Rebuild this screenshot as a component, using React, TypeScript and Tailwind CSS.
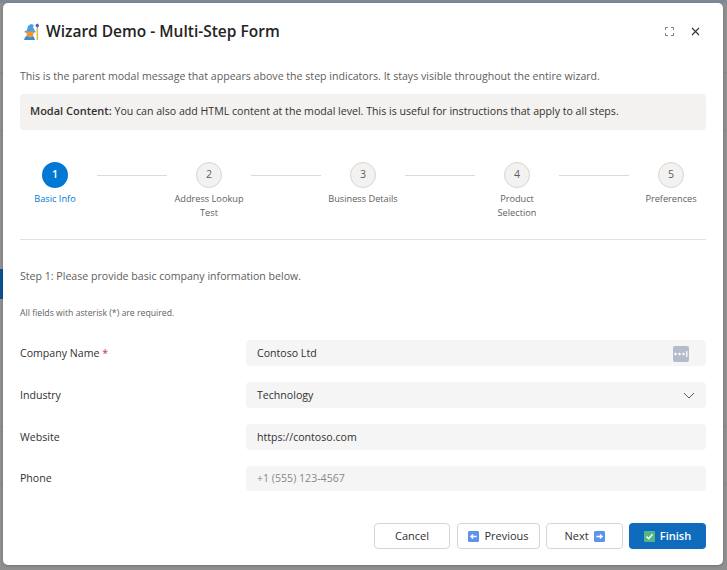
const inputRow = 'flex w-[460px] items-center justify-between rounded-[4px] bg-[#f5f5f5] pl-[11px] pt-[2px]'
const btn = 'flex h-[26px] items-center justify-center rounded-[4px] border border-[#d6d6d6] bg-white pt-px text-[11px] font-medium text-[#323130]'

const steps = [
  { n: 1, label: 'Basic Info' },
  { n: 2, label: 'Address Lookup\nTest' },
  { n: 3, label: 'Business Details' },
  { n: 4, label: 'Product\nSelection' },
  { n: 5, label: 'Preferences' },
]

function WizardIcon() {
  return (
    <svg width="17" height="18" viewBox="0 0 17 18">
      <path d="M1 9 L4 7 L5 3 L8 1 L11 2 L10 4 L12 8 L13 9 L7 11 Z" fill="#4a9fe6" />
      <path d="M1 17 Q2 12 7 12 Q11 12 12 17 Z" fill="#2f8fd8" />
      <path d="M3.5 8.5 H10.5 V11 Q10 14.5 7 14.5 Q4 14.5 3.5 11 Z" fill="#ef9433" />
      <rect x="13.6" y="4" width="1.5" height="13" fill="#f2b233" />
      <path d="M12.6 1.5 L15 0.5 L16.2 3 L14.4 4.6 L12.8 3.6 Z" fill="#2f6fb8" />
    </svg>
  )
}

function ArrowBox({ dir }: { dir: 'left' | 'right' }) {
  return (
    <svg width="11" height="11" viewBox="0 0 12 12">
      <rect width="12" height="12" rx="1.5" fill="#5b93ee" />
      {dir === 'left' ? (
        <path d="M9.5 6 H3.5 M5.5 3.8 L3.2 6 L5.5 8.2" stroke="#fff" strokeWidth="1.5" fill="none" />
      ) : (
        <path d="M2.5 6 H8.5 M6.5 3.8 L8.8 6 L6.5 8.2" stroke="#fff" strokeWidth="1.5" fill="none" />
      )}
    </svg>
  )
}

function Field({ label, required, children }: { label: string; required?: boolean; children: React.ReactNode }) {
  return (
    <div className="flex items-center justify-between">
      <div className="pt-[2px] text-[#323130]">
        {label}
        {required && <span className="text-[#c4314b]"> *</span>}
      </div>
      {children}
    </div>
  )
}

export default function App() {
  return (
    <div className="relative h-[570px] w-[727px] overflow-hidden bg-[#8f8f8f] pl-[3px] pt-[3px] font-['Open_Sans',sans-serif] text-[10.6px]">
      {/* dimmed page behind the modal */}
      <div className="absolute left-0 top-0 h-[3px] w-full bg-[#7d8994]" />
      <div className="absolute left-0 top-[72px] h-px w-full bg-[#878787]" />
      <div className="absolute left-0 top-[130px] h-px w-full bg-[#878787]" />
      <div className="absolute left-0 top-[426px] h-px w-full bg-[#878787]" />
      <div className="absolute left-0 top-[483px] h-px w-full bg-[#878787]" />
      <div className="absolute left-0 top-[269px] h-[30px] w-[3px] bg-[#0a5291]" />

      <div className="relative flex h-[562px] w-[720px] flex-col rounded-[5px] bg-white px-[17px] shadow-[0_1px_3px_rgba(0,0,0,0.2)]">
        {/* Header */}
        <div className="flex h-[56px] shrink-0 items-center justify-between pt-[1px]">
          <div className="flex items-center gap-[6px] pl-[3px] text-[15.5px] font-semibold text-[#242424]">
            <WizardIcon />
            <span>Wizard Demo - Multi-Step Form</span>
          </div>
          <div className="flex items-center gap-[17px] pr-[6px]">
            <svg width="9" height="9" viewBox="0 0 9 9" fill="none" stroke="#616161" strokeWidth="0.8">
              <path d="M0.5 3 V0.5 H3 M6 0.5 H8.5 V3 M8.5 6 V8.5 H6 M3 8.5 H0.5 V6" />
            </svg>
            <svg width="9" height="9" viewBox="0 0 9 9" fill="none" stroke="#323130" strokeWidth="1.1">
              <path d="M1 1 L8 8 M8 1 L1 8" />
            </svg>
          </div>
        </div>

        <p className="mt-[10px] text-[#605e5c]">
          This is the parent modal message that appears above the step indicators. It stays visible throughout the entire wizard.
        </p>
        <div className="mt-[9px] flex h-[36px] shrink-0 items-center rounded-[4px] bg-[#f3f2f1] px-[10px] text-[#323130]">
          <p>
            <strong className="text-[11px] font-semibold">Modal Content:</strong> You can also add HTML content at the modal level. This is useful for instructions that apply to all steps.
          </p>
        </div>

        {/* Stepper */}
        <div className="mt-[32px] flex h-[78px] shrink-0 items-start border-b border-[#e1e1e1]">
          {steps.map((s, i) => (
            <div key={s.n} className="flex items-start">
              <div className="flex w-[70px] flex-col items-center">
                <div
                  className={
                    s.n === 1
                      ? 'flex h-[26px] w-[26px] items-center justify-center rounded-full bg-[#0078d4] font-semibold text-white'
                      : 'flex h-[26px] w-[26px] items-center justify-center rounded-full border border-[#d6d6d6] bg-[#f3f2f1] text-[#605e5c]'
                  }
                >
                  {s.n}
                </div>
                <div className={s.n === 1 ? 'mt-[4px] whitespace-pre text-center text-[9.2px] leading-[14px] text-[#0078d4]' : 'mt-[4px] whitespace-pre text-center text-[9.2px] leading-[14px] text-[#605e5c]'}>
                  {s.label}
                </div>
              </div>
              {i < 4 && <div className="mx-[7px] mt-[13px] h-[1.5px] w-[70px] bg-[#dadada]" />}
            </div>
          ))}
        </div>

        <p className="mt-[29px] text-[#605e5c]">Step 1: Please provide basic company information below.</p>
        <p className="mt-[22px] text-[8.7px] text-[#605e5c]">All fields with asterisk (*) are required.</p>

        {/* Form */}
        <div className="mt-[20px] flex flex-col gap-[16px]">
          <Field label="Company Name" required>
            <div className={`${inputRow} h-[26px] pr-[17px] text-[#323130]`}>
              <span>Contoso Ltd</span>
              <svg width="16" height="16" viewBox="0 0 16 16">
                <rect width="16" height="16" rx="2" fill="#b4bccb" />
                <circle cx="2.5" cy="8" r="1.2" fill="#fff" />
                <circle cx="6.5" cy="8" r="1.2" fill="#fff" />
                <circle cx="10.5" cy="8" r="1.2" fill="#fff" />
                <rect x="13.2" y="5" width="1.2" height="6" fill="#fff" />
              </svg>
            </div>
          </Field>
          <Field label="Industry">
            <div className={`${inputRow} h-[26px] pr-[11px] text-[#323130]`}>
              <span>Technology</span>
              <svg width="12" height="7" viewBox="0 0 12 7" fill="none" stroke="#605e5c">
                <path d="M1 1 L6 6 L11 1" />
              </svg>
            </div>
          </Field>
          <Field label="Website">
            <div className={`${inputRow} h-[26px] text-[#323130]`}>https://contoso.com</div>
          </Field>
          <Field label="Phone">
            <div className={`${inputRow} h-[25px] text-[#8a8886]`}>+1 (555) 123-4567</div>
          </Field>
        </div>

        {/* Footer */}
        <div className="mb-[16px] mt-auto flex justify-end gap-[6px]">
          <button className={`${btn} mr-px w-[76px]`}>Cancel</button>
          <button className={`${btn} w-[83px] gap-[5px]`}>
            <ArrowBox dir="left" />
            Previous
          </button>
          <button className={`${btn} w-[77px] gap-[5px]`}>
            Next
            <ArrowBox dir="right" />
          </button>
          <button className="flex h-[26px] w-[77px] items-center justify-center gap-[5px] rounded-[4px] bg-[#0f6cbd] pt-px text-[11px] font-semibold text-white">
            <svg width="11" height="11" viewBox="0 0 11 11">
              <rect width="11" height="11" rx="1" fill="#55b685" />
              <path d="M2.5 5.5 L4.7 7.8 L8.5 3.2" stroke="#fff" strokeWidth="1.4" fill="none" />
            </svg>
            Finish
          </button>
        </div>
      </div>
    </div>
  )
}
